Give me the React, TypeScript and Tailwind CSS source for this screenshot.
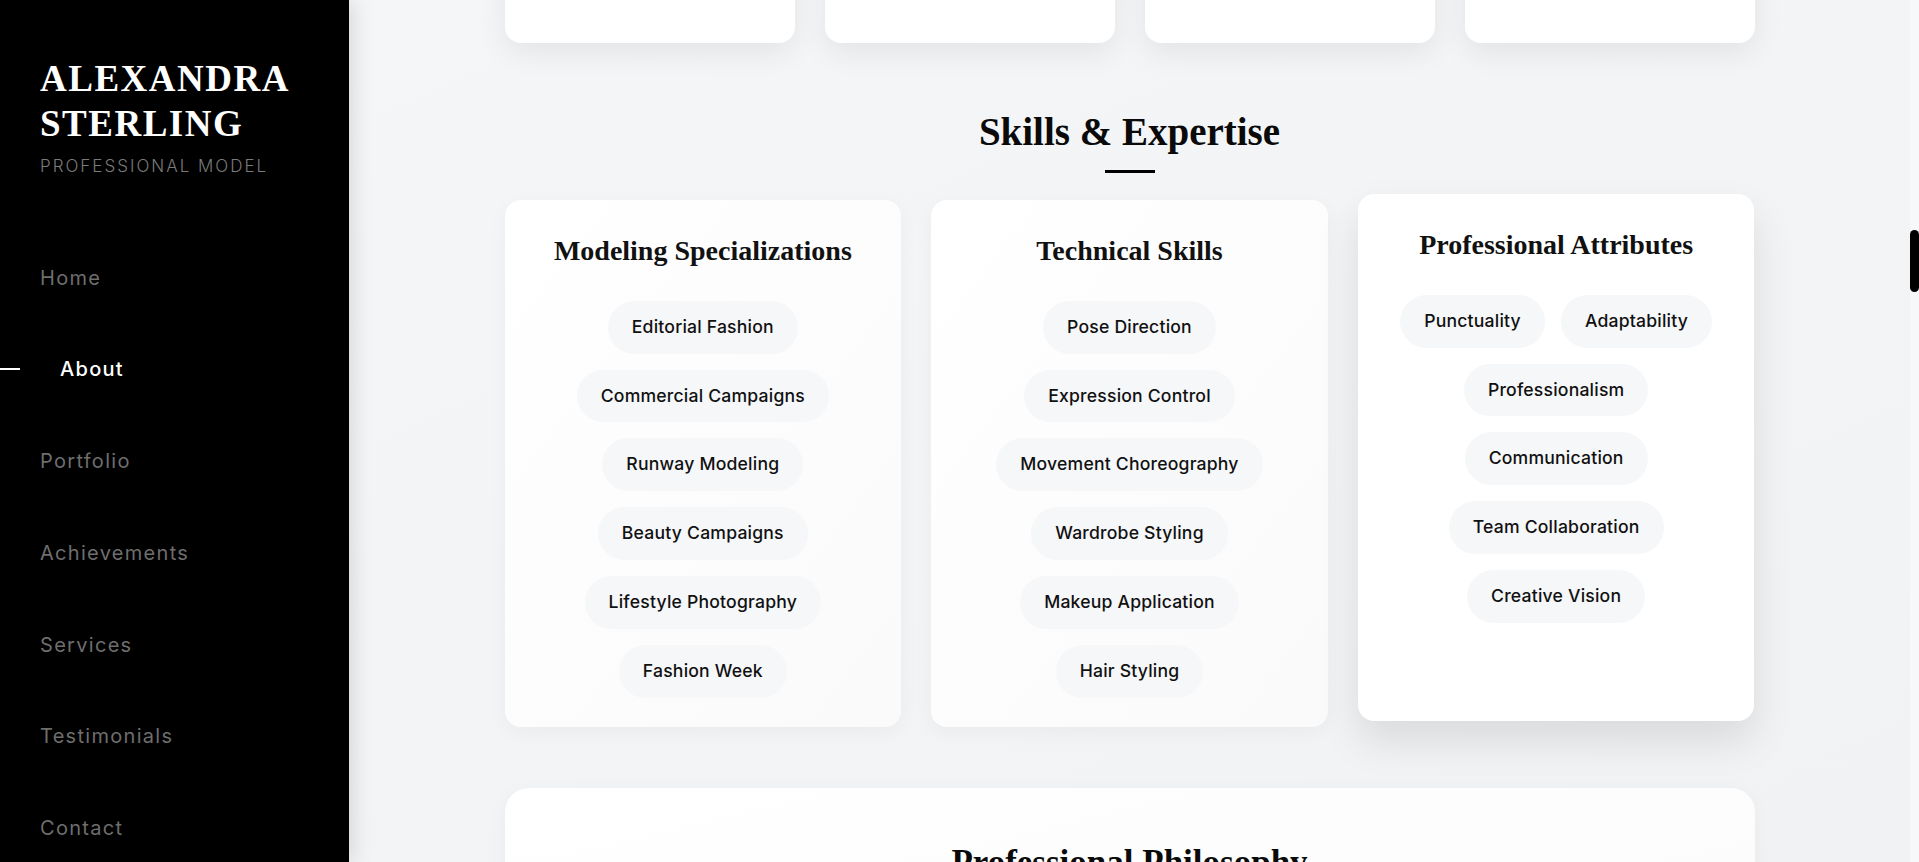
import React from "react";

const serif = { fontFamily: '"Liberation Serif", "Times New Roman", serif' };

const specializations = [
  "Editorial Fashion",
  "Commercial Campaigns",
  "Runway Modeling",
  "Beauty Campaigns",
  "Lifestyle Photography",
  "Fashion Week",
];
const technical = [
  "Pose Direction",
  "Expression Control",
  "Movement Choreography",
  "Wardrobe Styling",
  "Makeup Application",
  "Hair Styling",
];
const attributes = [
  "Punctuality",
  "Adaptability",
  "Professionalism",
  "Communication",
  "Team Collaboration",
  "Creative Vision",
];

const navItems = ["Home", "About", "Portfolio", "Achievements", "Services", "Testimonials", "Contact"];

function SkillCard({ title, tags, active }: { title: string; tags: string[]; active?: boolean }) {
  return (
    <div
      className={
        active
          ? "rounded-2xl bg-white px-10 pt-[37px] pb-[29px] -translate-y-[6px] shadow-[0_20px_40px_rgba(0,0,0,0.1)]"
          : "rounded-2xl bg-gradient-to-br from-white to-[#fafafa] px-10 pt-[37px] pb-[29px] shadow-[0_5px_20px_rgba(0,0,0,0.04)]"
      }
    >
      <h3 style={serif} className="text-center text-[28px] font-bold leading-[28px] text-[#111]">
        {title}
      </h3>
      <div className="mt-9 flex flex-wrap justify-center gap-4">
        {tags.map((t) => (
          <span
            key={t}
            className="rounded-full bg-[#f6f7f9] px-6 py-[13px] text-[17.6px] leading-[26.8px] font-medium tracking-[0.2px] text-[#111]"
          >
            {t}
          </span>
        ))}
      </div>
    </div>
  );
}

export default function App() {
  return (
    <div
      className="flex h-[862px] w-full overflow-hidden bg-gradient-to-br from-[#f5f6f8] to-[#f1f2f4]"
      style={{ fontFamily: 'Inter, "Noto Sans", sans-serif' }}
    >
      <aside className="relative z-10 h-full w-[349px] shrink-0 bg-black pl-10 pt-[56px] shadow-[4px_0_20px_rgba(0,0,0,0.12)]">
        <h1 style={serif} className="text-[37px] font-bold leading-[45px] tracking-[1.5px] text-white">
          ALEXANDRA
          <br />
          STERLING
        </h1>
        <p className="mt-[8px] text-[17px] font-light uppercase leading-[25.5px] tracking-[2px] text-[#7a7a7a]">
          Professional Model
        </p>
        <nav className="mt-[83px] flex flex-col gap-[61.8px]">
          {navItems.map((item) =>
            item === "About" ? (
              <div key={item} className="-ml-10 flex items-center">
                <span className="h-[2px] w-5 bg-white" />
                <span className="ml-10 text-[20px] font-medium leading-[30px] tracking-[1.3px] text-white">
                  {item}
                </span>
              </div>
            ) : (
              <div key={item} className="text-[20px] leading-[30px] tracking-[1.3px] text-[#6e6e6e]">
                {item}
              </div>
            )
          )}
        </nav>
      </aside>

      <main className="min-w-0 flex-1 overflow-hidden">
        <div className="mx-auto w-[1250px]">
          <div className="-mt-[117px] grid grid-cols-4 gap-[30px]">
            {[0, 1, 2, 3].map((i) => (
              <div key={i} className="h-[160px] rounded-2xl bg-white shadow-[0_10px_30px_rgba(0,0,0,0.07)]" />
            ))}
          </div>

          <div className="mt-[66px] flex flex-col items-center">
            <h2 style={serif} className="text-[39px] font-bold leading-[1.2] text-[#0a0a0a]">
              Skills &amp; Expertise
            </h2>
            <div className="mt-[14px] h-[3px] w-[50px] bg-black" />
          </div>

          <div className="mt-[27px] grid grid-cols-3 gap-[30px]">
            <SkillCard title="Modeling Specializations" tags={specializations} />
            <SkillCard title="Technical Skills" tags={technical} />
            <SkillCard title="Professional Attributes" tags={attributes} active />
          </div>

          <div className="mt-[61px] h-[300px] rounded-3xl bg-gradient-to-br from-white to-[#fafafa] pt-[54px] shadow-[0_5px_20px_rgba(0,0,0,0.04)]">
            <h2 style={serif} className="text-center text-[35px] font-bold leading-[1.2] text-[#0a0a0a]">
              Professional Philosophy
            </h2>
          </div>
        </div>
      </main>

      <div className="h-full w-[9px] shrink-0 bg-[#f7f8fa]">
        <div className="mt-[230px] h-[62px] w-[9px] rounded-full bg-black" />
      </div>
    </div>
  );
}
